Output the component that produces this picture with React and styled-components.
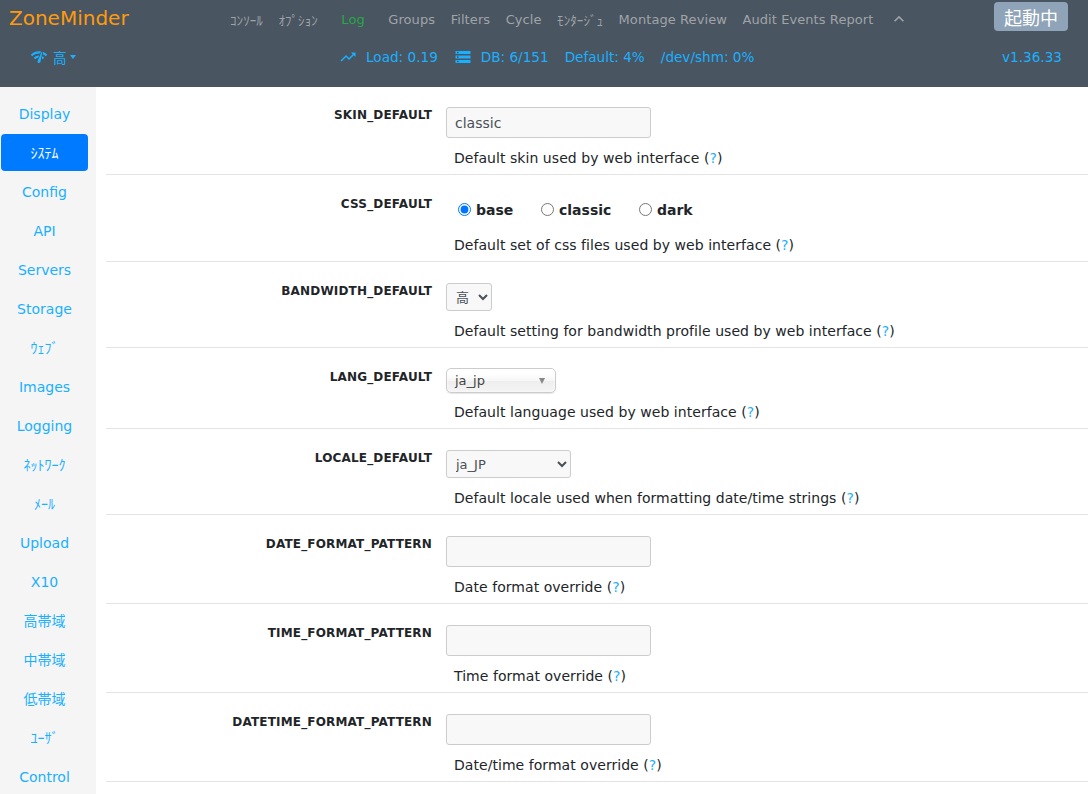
import React from 'react'
import styled, { createGlobalStyle } from 'styled-components'
import { MdNetworkCheck, MdTrendingUp, MdStorage, MdExpandLess } from 'react-icons/md'

const FONT = `"DejaVu Sans", "Noto Sans CJK JP", sans-serif`

const GlobalStyle = createGlobalStyle`
  html, body {
    margin: 0;
    height: 100%;
    overflow: hidden;
    background: #fff;
  }
  * { box-sizing: border-box; }
`

const navLinks = [
  { label: 'ｺﾝｿｰﾙ' },
  { label: 'ｵﾌﾟｼｮﾝ' },
  { label: 'Log', green: true },
  { label: 'Groups' },
  { label: 'Filters' },
  { label: 'Cycle' },
  { label: 'ﾓﾝﾀｰｼﾞｭ' },
  { label: 'Montage Review' },
  { label: 'Audit Events Report' },
]

const sideItems = [
  { label: 'Display' },
  { label: 'ｼｽﾃﾑ', cjk: true, active: true },
  { label: 'Config' },
  { label: 'API' },
  { label: 'Servers' },
  { label: 'Storage' },
  { label: 'ｳｪﾌﾞ', cjk: true },
  { label: 'Images' },
  { label: 'Logging' },
  { label: 'ﾈｯﾄﾜｰｸ', cjk: true },
  { label: 'ﾒｰﾙ', cjk: true },
  { label: 'Upload' },
  { label: 'X10' },
  { label: '高帯域', cjk: true },
  { label: '中帯域', cjk: true },
  { label: '低帯域', cjk: true },
  { label: 'ﾕｰｻﾞ', cjk: true },
  { label: 'Control' },
]

const App = () => {
  return (
    <>
      <GlobalStyle />
      <Page>
        <Header>
          <TopRow>
            <Brand>ZoneMinder</Brand>
            <Nav>
              {navLinks.map((link) => (
                <NavLink key={link.label} $green={link.green}>{link.label}</NavLink>
              ))}
              <Chevron><MdExpandLess size={20} /></Chevron>
            </Nav>
            <StateButton>起動中</StateButton>
          </TopRow>
          <StatusRow>
            <Bandwidth>
              <MdNetworkCheck size={18} />
              <span>高</span>
              <Caret />
            </Bandwidth>
            <Stats>
              <Stat><MdTrendingUp size={18} />Load: 0.19</Stat>
              <Stat><MdStorage size={18} />DB: 6/151</Stat>
              <Stat>Default: 4%</Stat>
              <Stat>/dev/shm: 0%</Stat>
            </Stats>
            <Version>v1.36.33</Version>
          </StatusRow>
        </Header>
        <Body>
          <Sidebar>
            {sideItems.map((item) => (
              <SideItem key={item.label} $active={item.active} $cjk={item.cjk}>{item.label}</SideItem>
            ))}
          </Sidebar>
          <Main>
            <Row>
              <Label>SKIN_DEFAULT</Label>
              <Field>
                <TextInput defaultValue="classic" readOnly />
                <Help text="Default skin used by web interface" />
              </Field>
            </Row>
            <Row>
              <Label>CSS_DEFAULT</Label>
              <Field>
                <Radios>
                  <RadioLabel $width={83}><input type="radio" name="css" defaultChecked />base</RadioLabel>
                  <RadioLabel $width={98}><input type="radio" name="css" />classic</RadioLabel>
                  <RadioLabel><input type="radio" name="css" />dark</RadioLabel>
                </Radios>
                <Help text="Default set of css files used by web interface" />
              </Field>
            </Row>
            <Row>
              <Label>BANDWIDTH_DEFAULT</Label>
              <Field>
                <SelectBox $width={46}><option>高</option></SelectBox>
                <Help text="Default setting for bandwidth profile used by web interface" />
              </Field>
            </Row>
            <Row>
              <Label>LANG_DEFAULT</Label>
              <Field>
                <ChosenBox>
                  <span>ja_jp</span>
                  <ChosenArrow />
                </ChosenBox>
                <Help $tight text="Default language used by web interface" />
              </Field>
            </Row>
            <Row>
              <Label>LOCALE_DEFAULT</Label>
              <Field>
                <SelectBox $width={125}><option>ja_JP</option></SelectBox>
                <Help text="Default locale used when formatting date/time strings" />
              </Field>
            </Row>
            <Row>
              <Label>DATE_FORMAT_PATTERN</Label>
              <Field>
                <TextInput readOnly />
                <Help text="Date format override" />
              </Field>
            </Row>
            <Row>
              <Label>TIME_FORMAT_PATTERN</Label>
              <Field>
                <TextInput readOnly />
                <Help text="Time format override" />
              </Field>
            </Row>
            <Row>
              <Label>DATETIME_FORMAT_PATTERN</Label>
              <Field>
                <TextInput readOnly />
                <Help text="Date/time format override" />
              </Field>
            </Row>
          </Main>
        </Body>
      </Page>
    </>
  )
}

const Help = ({ text, $tight }) => (
  <Description $tight={$tight}>{text} (<QuestionMark>?</QuestionMark>)</Description>
)

export default App

const Page = styled.div`
  height: 794px;
  overflow: hidden;
  font-family: ${FONT};
  display: flex;
  flex-direction: column;
`
const Header = styled.header`
  height: 87px;
  flex: none;
  background-color: #495561;
  padding: 2px 20px 0 9px;
`
const TopRow = styled.div`
  display: flex;
  align-items: flex-start;
  height: 29px;
`
const Brand = styled.div`
  font-size: 20px;
  line-height: 36px;
  margin-top: -2px;
  color: #ff9a0d;
  width: 221px;
`
const Nav = styled.nav`
  display: flex;
  align-items: center;
  height: 32px;
  margin-top: 1px;
  gap: 15.5px;
  flex: 1;
`
const NavLink = styled.a`
  font-size: 13px;
  letter-spacing: 0.08px;
  color: ${(p) => (p.$green ? '#28a745' : '#a0a4a8')};
  margin: ${(p) => (p.$green ? '0 8px' : '0')};
  white-space: nowrap;
`
const Chevron = styled.span`
  display: flex;
  color: #a0a4a8;
  margin-left: 0;
`
const StateButton = styled.button`
  width: 74px;
  height: 29px;
  border: 0;
  border-radius: 4px;
  background-color: #8fa4b8;
  color: #fff;
  font-family: ${FONT};
  font-size: 18px;
  padding: 0;
`
const StatusRow = styled.div`
  display: flex;
  align-items: center;
  height: 24px;
  margin-top: 14px;
  color: #1ab0ff;
  font-size: 13.6px;
`
const Bandwidth = styled.div`
  display: flex;
  align-items: center;
  gap: 5px;
  width: 330px;
  padding-left: 21px;
`
const Caret = styled.i`
  width: 0;
  height: 0;
  margin-left: -2px;
  border-top: 4px solid currentColor;
  border-left: 3px solid transparent;
  border-right: 3px solid transparent;
`
const Stats = styled.div`
  display: flex;
  align-items: center;
  gap: 16px;
  flex: 1;
`
const Stat = styled.span`
  display: flex;
  align-items: center;
  gap: 9px;
  white-space: nowrap;
`
const Version = styled.span`
  white-space: nowrap;
  padding-right: 6px;
`
const Body = styled.div`
  display: flex;
  flex: 1;
  min-height: 0;
`
const Sidebar = styled.aside`
  width: 96px;
  flex: none;
  background-color: #f5f5f5;
  padding: 8px 8px 0 1px;
  display: flex;
  flex-direction: column;
  gap: 2px;
`
const SideItem = styled.a`
  height: 37px;
  flex: none;
  display: flex;
  align-items: center;
  justify-content: center;
  padding-bottom: ${(p) => (p.$cjk ? '2px' : '0')};
  border-radius: 4px;
  font-size: 14px;
  color: ${(p) => (p.$active ? '#fff' : '#1ab0ff')};
  background-color: ${(p) => (p.$active ? '#007bff' : 'transparent')};
`
const Main = styled.main`
  flex: 1;
  min-width: 0;
  margin-left: 10px;
`
const Row = styled.div`
  display: grid;
  grid-template-columns: 326px 1fr;
  column-gap: 14px;
  padding: 21px 0 6px;
  border-bottom: 1px solid #e4e4e4;
  &:first-child { padding-top: 20px; }
`
const Label = styled.label`
  font-size: 12px;
  font-weight: 700;
  letter-spacing: 0.17px;
  line-height: 14px;
  text-align: right;
  color: #212529;
  padding-top: 1px;
`
const Field = styled.div`
  min-width: 0;
`
const TextInput = styled.input`
  display: block;
  width: 205px;
  height: 31px;
  border: 1px solid #ccc;
  border-radius: 3px;
  background-color: #f8f8f8;
  color: #495057;
  font-family: ${FONT};
  font-size: 14px;
  padding: 0 8px;
  outline: none;
`
const SelectBox = styled.select`
  display: block;
  width: ${(p) => p.$width}px;
  height: 28px;
  border: 1px solid #ccc;
  border-radius: 3px;
  background-color: #f8f8f8;
  color: #495057;
  font-family: ${FONT};
  font-size: 13px;
  padding: 0 5px;
`
const ChosenBox = styled.div`
  position: relative;
  width: 110px;
  height: 25px;
  margin-top: -1px;
  padding: 0 8px;
  display: flex;
  align-items: center;
  border: 1px solid #ccc;
  border-radius: 5px;
  background: linear-gradient(#fff 20%, #f6f6f6 50%, #eee 52%, #f4f4f4);
  box-shadow: 0 0 3px #fff inset, 0 1px 1px rgba(0, 0, 0, 0.1);
  color: #444;
  font-size: 13px;
`
const ChosenArrow = styled.i`
  position: absolute;
  right: 10px;
  top: 9px;
  width: 0;
  height: 0;
  border-top: 6px solid #888;
  border-left: 3.5px solid transparent;
  border-right: 3.5px solid transparent;
`
const Radios = styled.div`
  display: flex;
  align-items: center;
  height: 29px;
  padding: 0 0 2px 12px;
`
const RadioLabel = styled.label`
  display: flex;
  align-items: center;
  width: ${(p) => (p.$width ? `${p.$width}px` : 'auto')};
  font-size: 14px;
  font-weight: 700;
  color: #212529;
  input {
    margin: 0 5px 0 0;
    width: 13px;
    height: 13px;
  }
`
const Description = styled.div`
  margin-top: ${(p) => (p.$tight ? '9px' : '10px')};
  padding-left: 8px;
  font-size: 14px;
  letter-spacing: 0.05px;
  line-height: 20px;
  color: #212529;
  white-space: nowrap;
`
const QuestionMark = styled.a`
  color: #1ab0ff;
`
